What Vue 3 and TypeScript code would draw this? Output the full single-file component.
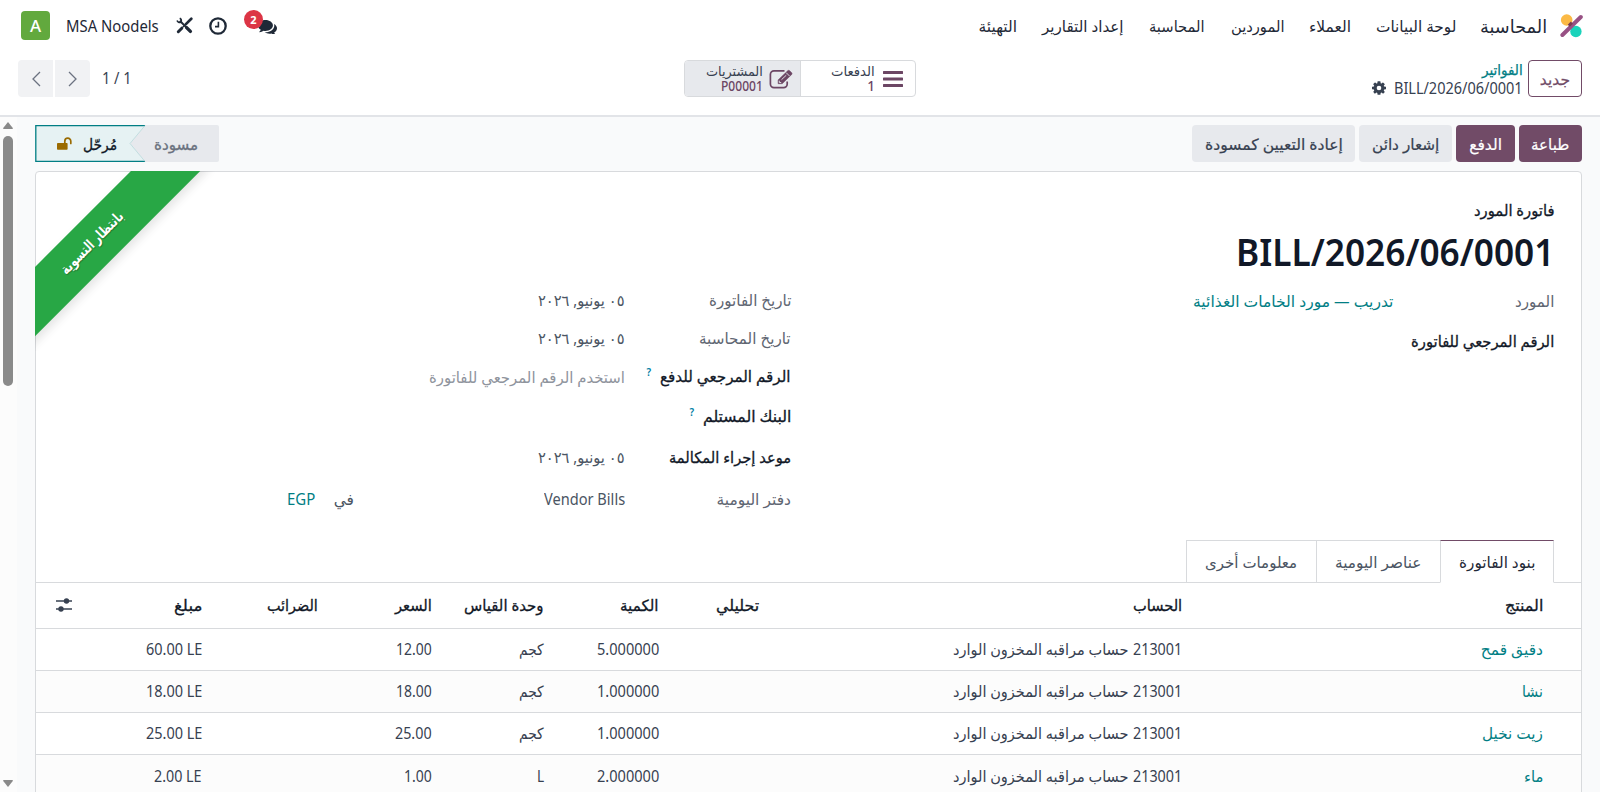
<script setup lang="ts">
import { defineComponent, h, onMounted, ref } from 'vue'

// Text laid out at an exact width, squeezed or stretched horizontally from its right edge.
const Fit = defineComponent({
  props: { t: { type: String, required: true }, w: { type: Number, required: true } },
  setup(props) {
    const inner = ref<HTMLElement | null>(null)
    const scale = ref(1)
    onMounted(() => {
      const natural = inner.value?.offsetWidth ?? 0
      if (natural > 0) scale.value = props.w / natural
    })
    return () =>
      h('span', { class: 'fit', style: { width: props.w + 'px' } }, [
        h('bdi', { ref: inner, class: 'fit-text', style: { transform: `scaleX(${scale.value})` } }, props.t),
      ])
  },
})

interface Label { t: string; w: number }
interface Line { product: Label; qty: Label; uom: Label; price: Label; amount: Label }

const menus: Label[] = [
  { t: 'لوحة البيانات', w: 80 },
  { t: 'العملاء', w: 42 },
  { t: 'الموردين', w: 54 },
  { t: 'المحاسبة', w: 56 },
  { t: 'إعداد التقارير', w: 82 },
  { t: 'التهيئة', w: 39 },
]

const tabs: Label[] = [
  { t: 'بنود الفاتورة', w: 76 },
  { t: 'عناصر اليومية', w: 86 },
  { t: 'معلومات أخرى', w: 92 },
]

const kg: Label = { t: 'كجم', w: 25 }
const lines: Line[] = [
  { product: { t: 'دقيق قمح', w: 62 }, qty: { t: '5.000000', w: 62 }, uom: kg, price: { t: '12.00', w: 36 }, amount: { t: '60.00 LE', w: 56 } },
  { product: { t: 'نشا', w: 21 }, qty: { t: '1.000000', w: 62 }, uom: kg, price: { t: '18.00', w: 36 }, amount: { t: '18.00 LE', w: 56 } },
  { product: { t: 'زيت نخيل', w: 61 }, qty: { t: '1.000000', w: 62 }, uom: kg, price: { t: '25.00', w: 37 }, amount: { t: '25.00 LE', w: 56 } },
  { product: { t: 'ماء', w: 19 }, qty: { t: '2.000000', w: 62 }, uom: { t: 'L', w: 7 }, price: { t: '1.00', w: 28 }, amount: { t: '2.00 LE', w: 48 } },
]
</script>

<template>
  <div class="app" dir="rtl">
    <header class="nav">
      <svg class="logo" viewBox="0 0 24 24" width="24" height="24">
        <circle cx="7.700" cy="6" r="5.800" fill="#fbb945" />
        <circle cx="16.900" cy="17.500" r="5.700" fill="#1ad3bb" />
        <path d="M3.400 21 21.800 3" stroke="#985184" stroke-width="4" stroke-linecap="round" />
        <path d="M12.900 8.600 9.800 11.700" stroke="#7b3a52" stroke-width="3" />
      </svg>
      <span class="brand"><Fit t="المحاسبة" :w="67" /></span>
      <nav class="menus">
        <Fit v-for="m in menus" :key="m.t" :t="m.t" :w="m.w" />
      </nav>
      <div class="systray">
        <span class="chat">
          <svg viewBox="0 0 1792 1536" width="19" height="17"><path fill="#1f2937" d="M1408 768c0 -283 -315 -512 -704 -512S0 485 0 768c0 162 104 306 266 400c-33 80 -79 122 -120 168c-12 14 -26 27 -22 46c3 17 17 29 33 27c126 -16 265 -75 365 -147c57 12 119 18 182 18c389 0 704 -229 704 -512zm384 256c0 -167 -110 -315 -279 -409c15 49 23 101 23 153c0 182 -94 351 -265 474c-153 111 -354 173 -567 173c-24 0 -50 -1 -75 -3c120 76 278 124 459 124c63 0 125 -6 182 -18c100 72 239 131 365 147c16 2 30 -10 33 -27c4 -19 -10 -32 -22 -46c-41 -46 -87 -88 -120 -168c162 -94 266 -238 266 -400z" /></svg>
          <b class="badge">2</b>
        </span>
        <svg class="clock" viewBox="0 0 18 18" width="18" height="18" fill="none" stroke="#1f2937"><circle cx="9" cy="9" r="7.700" stroke-width="2.300" /><path d="M9.400 4.800V9.600H6" stroke-width="1.600" /></svg>
        <svg class="tools" viewBox="0 0 17 17" width="17" height="17" fill="none" stroke="#1f2937">
          <path d="M3.800 3.800 13.400 13.400" stroke-width="2" />
          <path d="M10.600 10.600 14.400 14.400" stroke-width="3.400" stroke-linecap="round" />
          <path d="M1.100 3.600A2.500 2.500 0 0 0 4.800 5 2.500 2.500 0 0 0 3.700 1.200" stroke-width="1.700" />
          <path d="M15.300 1.700 9.900 7.100" stroke-width="2.700" stroke-linecap="round" />
          <path d="M9.600 7.400 6.500 10.500" stroke-width="1.300" />
          <path d="M5.800 11.200 2.300 14.700" stroke-width="3" stroke-linecap="round" />
        </svg>
        <span class="company"><Fit t="MSA Noodels" :w="93" /></span>
        <span class="avatar">A</span>
      </div>
    </header>

    <section class="control">
      <button class="new"><Fit t="جديد" :w="30" /></button>
      <div class="crumbs">
        <span class="crumb-link"><Fit t="الفواتير" :w="41" /></span>
        <span class="crumb-now">
          <Fit t="BILL/2026/06/0001" :w="129" />
          <svg viewBox="0 0 1536 1536" width="14" height="14"><path fill="#374151" fill-rule="evenodd" d="M1024 768a256 256 0 1 1-512 0 256 256 0 0 1 512 0zm512-109c0-12-10-24-22-26l-185-28c-10-34-23-66-39-95 34-49 70-92 106-138 12-14 10-27 0-41-24-34-160-174-190-174-8 0-16 3-23 8L1045 273c-31-16-61-28-93-38-8-63-13-127-29-188-4-13-14-22-27-22H640c-13 0-25 10-27 23-16 61-20 124-28 187-32 9-63 22-93 38L353 165c-7-5-16-8-24-8-29 0-168 142-190 175-12 14-9 25 0 38 36 46 73 92 107 140-18 31-31 63-41 98L23 635c-13 2-23 13-23 27v222c0 12 10 23 22 25l186 28c9 34 22 66 38 96-34 49-70 92-106 138-6 7-8 13-8 21 0 7 2 14 7 20 24 33 161 174 190 174 8 0 17-3 24-8l138-108c30 16 61 28 93 38 8 63 13 127 29 188 4 13 14 22 27 22h256c13 0 25-10 27-23 16-61 20-124 28-187 32-9 63-22 93-38l139 108c7 5 16 8 24 8 29 0 168-142 190-175 12-14 9-25 0-38-36-46-73-92-107-140 18-30 31-62 41-97l182-28c13-2 23-13 23-27z" /></svg>
        </span>
      </div>
      <div class="stats">
        <button class="stat">
          <svg class="bars" viewBox="0 0 20 18" width="20" height="18"><path d="M1 2.500H19M1 9H19M1 15.500H19" stroke="#6c4664" stroke-width="3" stroke-linecap="round" /></svg>
          <span class="stat-text"><Fit t="الدفعات" :w="44" /><em>1</em></span>
        </button>
        <button class="stat on">
          <svg class="edit" viewBox="0 0 24 20" width="24" height="20" fill="none" stroke="#6c4664"><path d="M15.500 1.900H5a3.600 3.600 0 0 0-3.600 3.600v9.500A3.600 3.600 0 0 0 5 18.600H14.600A3.600 3.600 0 0 0 18.200 15V12.500" stroke-width="1.700" /><path d="M18.900 1.600Q19.800.9 20.700 1.700L22.700 3.700Q23.500 4.600 22.700 5.500L13.200 14.700H9.100V10.900Z" fill="#6c4664" stroke-width=".5" /><path d="M17.200 3.700 20.600 7.100M12.500 10.700 17.300 6.200M10.300 11.700V13.500H12.200" stroke="#e7e9ed" stroke-width=".9" /></svg>
          <span class="stat-text"><Fit t="المشتريات" :w="57" /><em><Fit t="P00001" :w="42" /></em></span>
        </button>
      </div>
      <div class="pager" dir="ltr">
        <button class="prev"><svg viewBox="0 0 10 16" width="10" height="16"><path d="M9 1 2 8l7 7" /></svg></button>
        <button class="next"><svg viewBox="0 0 10 16" width="10" height="16"><path d="M1 1l7 7-7 7" /></svg></button>
        <span class="count"><Fit t="1 / 1" :w="30" /></span>
      </div>
    </section>

    <main class="body">
      <div class="content">
        <div class="statusbar">
          <button class="btn primary p1"><Fit t="طباعة" :w="38" /></button>
          <button class="btn primary p2"><Fit t="الدفع" :w="33" /></button>
          <button class="btn p3"><Fit t="إشعار دائن" :w="67" /></button>
          <button class="btn p4"><Fit t="إعادة التعيين كمسودة" :w="138" /></button>
          <div class="status">
            <svg class="status-bg" viewBox="0 0 184 37" width="184" height="37">
              <path d="M110 0H182a2 2 0 0 1 2 2V35a2 2 0 0 1-2 2H110L95 18.500Z" fill="#e7e9ed" />
              <path d="M110 .5H1V36.500H110L95 18.500Z" fill="#e6f2f3" />
              <path d="M110 .7H.8V36.300H110" fill="none" stroke="#017e84" stroke-width="1.300" />
              <path d="M110 .5 95 18.500 110 36.500" fill="none" stroke="#b9d9dc" stroke-width=".8" />
            </svg>
            <span class="st-draft"><Fit t="مسودة" :w="44" /></span>
            <span class="st-posted"><Fit t="مُرحّل" :w="34" /></span>
            <svg class="lock" viewBox="0 0 15 13" width="15" height="13"><rect x="0" y="6" width="10.600" height="6.800" rx=".8" fill="#9a6b01" /><path d="M7.800 6V4.200a3 3 0 0 1 6 0V6.400" fill="none" stroke="#9a6b01" stroke-width="1.700" stroke-linecap="round" /></svg>
          </div>
        </div>

        <div class="sheet">
          <div class="ribbon-box"><div class="ribbon"><Fit t="بانتظار التسوية" :w="82" /></div></div>
          <div class="kind"><Fit t="فاتورة المورد" :w="80" /></div>
          <h1><Fit t="BILL/2026/06/0001" :w="318" /></h1>

          <div class="groups">
            <div class="group g1">
              <div class="field r1"><label class="muted"><Fit t="المورد" :w="39" /></label><span class="teal"><Fit t="تدريب — مورد الخامات الغذائية" :w="200" /></span></div>
              <div class="field r2"><label class="strong"><Fit t="الرقم المرجعي للفاتورة" :w="143" /></label></div>
            </div>
            <div class="group g2">
              <div class="field f1"><label class="muted"><Fit t="تاريخ الفاتورة" :w="82" /></label><Fit t="٠٥ يونيو, ٢٠٢٦" :w="87" /></div>
              <div class="field f2"><label class="muted"><Fit t="تاريخ المحاسبة" :w="92" /></label><Fit t="٠٥ يونيو, ٢٠٢٦" :w="87" /></div>
              <div class="field f3"><label class="strong"><Fit t="الرقم المرجعي للدفع" :w="131" /><sup>?</sup></label><span class="hint"><Fit t="استخدم الرقم المرجعي للفاتورة" :w="196" /></span></div>
              <div class="field f4"><label class="strong"><Fit t="البنك المستلم" :w="88" /><sup>?</sup></label></div>
              <div class="field f5"><label class="strong"><Fit t="موعد إجراء المكالمة" :w="122" /></label><Fit t="٠٥ يونيو, ٢٠٢٦" :w="87" /></div>
              <div class="field f6"><label class="muted"><Fit t="دفتر اليومية" :w="75" /></label><span class="journal"><Fit t="Vendor Bills" :w="81" /></span><span class="in"><Fit t="في" :w="20" /></span><span class="teal"><Fit t="EGP" :w="28" /></span></div>
            </div>
          </div>

          <div class="tabs">
            <button v-for="(tab, i) in tabs" :key="tab.t" class="tab" :class="{ active: i === 0 }"><Fit :t="tab.t" :w="tab.w" /></button>
          </div>

          <div class="list">
            <div class="row head">
              <Fit t="المنتج" :w="38" />
              <Fit t="الحساب" :w="49" />
              <Fit t="تحليلي" :w="43" />
              <Fit t="الكمية" :w="39" />
              <Fit t="وحدة القياس" :w="80" />
              <Fit t="السعر" :w="37" />
              <Fit t="الضرائب" :w="51" />
              <Fit t="مبلغ" :w="28" />
              <svg class="sliders" viewBox="0 0 16 14" width="16" height="14"><path d="M0 3H16M0 11H16" stroke="#374151" stroke-width="1.300" /><circle cx="10.500" cy="3" r="2.700" fill="#374151" /><circle cx="5" cy="11" r="2.700" fill="#374151" /></svg>
            </div>
            <div v-for="(l, i) in lines" :key="i" class="row">
              <span class="teal"><Fit :t="l.product.t" :w="l.product.w" /></span>
              <span class="account"><Fit t="213001" :w="49" /><Fit t="حساب مراقبه المخزون الوارد" :w="176" /></span>
              <span></span>
              <Fit :t="l.qty.t" :w="l.qty.w" />
              <Fit :t="l.uom.t" :w="l.uom.w" />
              <Fit :t="l.price.t" :w="l.price.w" />
              <span></span>
              <Fit :t="l.amount.t" :w="l.amount.w" />
            </div>
          </div>
        </div>
      </div>
      <div class="scrollbar">
        <svg viewBox="0 0 10 7" width="10" height="7"><path d="M5 0 10 6.200Q10 7 9 7H1Q0 7 0 6.200Z" fill="#8a8a8a" /></svg>
        <i class="thumb"></i>
        <svg viewBox="0 0 10 7" width="10" height="7"><path d="M5 7 10 .8Q10 0 9 0H1Q0 0 0 .8Z" fill="#8a8a8a" /></svg>
      </div>
    </main>
  </div>
</template>

<style>
body { margin: 0; overflow: hidden; }
.fit { display: inline-block; white-space: nowrap; flex: none; text-align: right; direction: rtl; }
.fit-text { display: inline-block; transform-origin: 100% 50%; }
</style>

<style scoped>
.app { width: 1600px; height: 792px; overflow: hidden; display: flex; flex-direction: column; background: #fff; color: #374151; font: 15.5px/22px "Noto Sans", "DejaVu Sans", sans-serif; }
.app * { box-sizing: border-box; }
button { font: inherit; color: inherit; border: 0; padding: 0; margin: 0; background: none; display: flex; align-items: center; justify-content: center; }
svg { display: block; flex: none; }
.nav { height: 51px; flex: none; display: flex; align-items: center; padding: 0 17px 0 21px; color: #1f2937; }
.brand { margin-right: 12px; font-size: 18px; }
.menus { display: flex; gap: 25px; margin-right: 24px; }
.systray { display: flex; align-items: center; margin-right: auto; }
.chat { position: relative; margin-left: 31px; }
.badge { position: absolute; top: -7px; left: -14px; width: 19px; height: 19px; border-radius: 50%; background: #dc3545; color: #fff; font-size: 11px; line-height: 19px; text-align: center; }
.clock { margin-left: 16px; }
.tools { margin-left: 17px; }
.company { margin-left: 16px; }
.avatar { width: 29px; height: 29px; border-radius: 4px; background: #62a93e; color: #fff; font-size: 17px; line-height: 29px; text-align: center; font-weight: 500; }
.control { height: 66px; flex: none; display: flex; padding: 9px 18px 0; border-bottom: 2px solid #e2e4e8; }
.new { width: 54px; height: 37px; border: 1px solid #714b67; border-radius: 4px; color: #714b67; font-weight: 500; -webkit-text-stroke: .25px; }
.crumbs { display: flex; flex-direction: column; margin-right: 5px; }
.crumb-link { color: #017e84; height: 18px; line-height: 18px; font-size: 14.5px; -webkit-text-stroke: .25px; }
.crumb-now { display: flex; align-items: center; gap: 8px; height: 20px; }
.stats { display: flex; width: 232px; height: 37px; margin-right: 456px; border: 1px solid #d8dadd; border-radius: 4px; overflow: hidden; }
.stat { width: 114px; justify-content: flex-start; padding-right: 12px; }
.stat.on { width: 116px; background: #e7e9ed; border-right: 1px solid #d8dadd; padding-right: 7px; }
.stat-text { display: flex; flex-direction: column; margin-right: 8px; padding-top: 1px; line-height: 15px; font-size: 13.5px; }
.on .stat-text { margin-right: 6px; }
.stat-text em { font-style: normal; color: #6c4664; font-weight: 500; text-align: right; }
.pager { display: flex; gap: 2px; margin-right: auto; height: 37px; }
.pager button { width: 35px; height: 37px; background: #f1f2f4; }
.pager path { fill: none; stroke: #6b7280; stroke-width: 1.3; }
.prev { border-radius: 4px 0 0 4px; }
.next { border-radius: 0 4px 4px 0; }
.count { margin-left: 10px; line-height: 37px; }
.body { flex: 1; min-height: 0; display: flex; background: #f9fafb; }
.content { flex: 1; padding: 8px 18px 0 17.5px; overflow: hidden; }
.scrollbar { width: 17px; background: #fcfcfc; display: flex; flex-direction: column; align-items: center; padding: 5px 1px 5px 0; }
.scrollbar .thumb { width: 10px; height: 250px; border-radius: 5px; background: #8a8a8a; margin: 7px 0 auto; }
.statusbar { display: flex; gap: 4px; height: 37px; }
.btn { height: 37px; border-radius: 4px; background: #e7e9ed; font-weight: 500; -webkit-text-stroke: .2px; }
.primary { background: #714b67; color: #fff; }
.p1 { width: 63px; } .p2 { width: 59px; } .p3 { width: 93px; } .p4 { width: 163px; }
.status { position: relative; width: 184px; display: flex; align-items: center; margin-right: auto; }
.status-bg { position: absolute; inset: 0; }
.status span, .lock { position: relative; }
.st-draft { margin-right: 20px; color: #6b7280; -webkit-text-stroke: .3px; }
.st-posted { margin-right: 37px; color: #111827; -webkit-text-stroke: .3px; }
.lock { margin-right: 12px; }
.sheet { position: relative; margin-top: 9px; height: 720px; border: 1px solid #d8dadd; border-radius: 4px 4px 0 0; background: #fff; }
.ribbon-box { position: absolute; left: -1px; top: -1px; width: 180px; height: 180px; overflow: hidden; }
.ribbon { position: absolute; left: -76px; top: 47px; width: 270px; height: 48.5px; transform: rotate(-45deg); background: #28a745; color: #fff; font-size: 14.5px; font-weight: 600; line-height: 44px; padding-right: 3px; text-align: center; box-shadow: 0 5px 10px rgba(0, 0, 0, .1); text-shadow: 0 1px 1px rgba(0, 0, 0, .35); }
.kind { padding: 27px 27px 0 0; height: 50px; color: #111827; -webkit-text-stroke: .3px; }
h1 { margin: 0 27px 0 0; height: 60px; line-height: 60px; font-size: 37px; font-weight: 600; color: #111827; }
.groups { display: flex; height: 258px; padding-right: 27px; }
.group { flex: none; }
.g1 { width: 763px; }
.g2 { margin-top: -1px; }
.field { display: flex; align-items: center; height: 38px; color: #4b5563; }
.field label { display: flex; flex: none; width: 161px; }
.g2 .field label { width: 166px; }
.r2 { height: 42px; }
.f3 .hint { padding-top: 2px; }
.f4 { height: 41px; } .f5 { height: 42px; } .f6 { height: 41px; }
.field .muted { color: #5f6672; }
.strong { color: #111827; -webkit-text-stroke: .3px; }
.hint { color: #8f949d; }
.teal { color: #017e84; }
.field sup { color: #0180a5; font-size: 10px; line-height: 10px; margin: 2px 9px 0 0; -webkit-text-stroke: 0; font-weight: 600; }
.journal { width: 271px; }
.in { margin-left: 19px; }
.tabs { display: flex; height: 43px; padding-right: 27px; border-bottom: 1px solid #d8dadd; }
.tab { height: 43px; width: 130px; border: 1px solid #d8dadd; border-right: 0; color: #4b5563; }
.tab:nth-child(2) { width: 124px; }
.tab.active { width: 114px; border-top-color: #714b67; border-right: 1px solid #d8dadd; border-bottom-color: #fff; color: #1f2937; }
.row { display: grid; grid-template-columns: 360.5px 423.5px 100px 115px 112px 114px 116px 130px 1fr; align-items: center; height: 42.2px; padding-right: 38px; border-bottom: 1px solid #d8dadd; }
.row > * { justify-self: start; }
.row.head { height: 45.5px; color: #111827; -webkit-text-stroke: .3px; }
.row:nth-child(odd):not(.head) { background: #fcfcfc; }
.account { display: flex; gap: 5px; }
</style>
